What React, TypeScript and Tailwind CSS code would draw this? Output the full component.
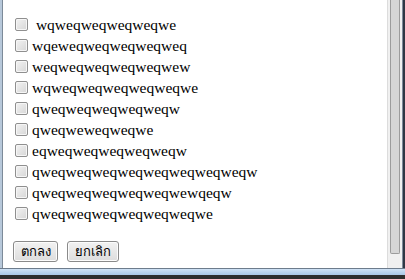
const items = [
  ' wqweqweqweqweqwe',
  'wqeweqweqweqweqweq',
  'weqweqweqweqweqwew',
  'wqweqweqweqweqweqwe',
  'qweqweqweqweqweqw',
  'qweqweweqweqwe',
  'eqweqweqweqweqweqw',
  'qweqweqweqweqweqweqweqweqw',
  'qweqweqweqweqweqwewqeqw',
  'qweqweqweqweqweqweqwe',
];

function Checkbox() {
  return (
    <input
      type="checkbox"
      className="appearance-none w-[13px] h-[13px] shrink-0 rounded-[2px] border border-[#8f8f8f] bg-gradient-to-br from-[#f3f3f3] to-[#d6d6d6] shadow-[inset_0_0_0_1px_#f6f6f6]"
    />
  );
}

function Button({ label, width }: { label: string; width: string }) {
  return (
    <button
      className={`${width} h-[21px] rounded-[3px] border border-[#8a8a8a] bg-gradient-to-b from-[#f2f2f2] to-[#dddddd] text-[13px] leading-none text-black shadow-[inset_0_0_0_1px_#fcfcfc] [font-family:Tahoma,'DejaVu_Sans','Noto_Sans',sans-serif]`}
    >
      {label}
    </button>
  );
}

export default function App() {
  return (
    <div className="w-[405px] h-[279px] flex flex-col overflow-hidden bg-white">
      <div className="flex flex-1 min-h-0">
        {/* window left edge */}
        <div className="w-[2px] bg-[#b7c8da]" />
        <div className="w-px bg-[#7c8a99]" />

        {/* list + buttons */}
        <div className="flex-1 flex flex-col pl-[12px] pt-[14px] [font-family:'Liberation_Serif',serif] text-black">
          <div className="flex flex-col">
            {items.map((item, i) => (
              <label key={i} className="flex items-center h-[21px] gap-[4px] text-[15.5px] whitespace-pre">
                <Checkbox />
                <span>{item}</span>
              </label>
            ))}
          </div>
          <div className="flex gap-[9px] mt-[17px] -ml-[2px]">
            <Button label="ตกลง" width="w-[45px]" />
            <Button label="ยกเลิก" width="w-[52px]" />
          </div>
        </div>

        {/* scrollbar */}
        <div className="w-[15px] border-l border-[#dcdcdc] bg-[#f0f0f0] flex justify-center pr-px">
          <div className="w-[10px] h-[254px] rounded-b-[2px] border border-t-0 border-[#9c9c9c] bg-[#d6d6d6]" />
        </div>

        {/* window right edge */}
        <div className="w-px bg-[#7c8a99]" />
        <div className="w-[2px] bg-[#2f3744]" />
      </div>

      {/* window bottom edge */}
      <div className="h-px bg-[#6d7c8c]" />
      <div className="h-[6px] bg-gradient-to-b from-[#cfe2f5] to-[#a8c6e6]" />
      <div className="h-[4px] bg-[#2d2d2d]" />
    </div>
  );
}
